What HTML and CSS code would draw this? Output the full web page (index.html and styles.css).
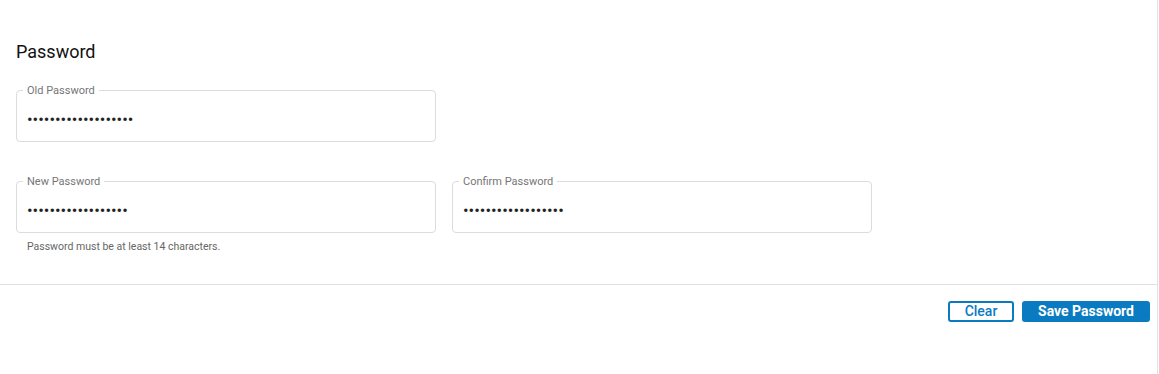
FILE: index.html
```html
<!DOCTYPE html>
<html>
<head>
<meta charset="utf-8">
<link rel="stylesheet" href="styles.css">
</head>
<body>
<div class="page">
  <section class="form">
    <h2 class="title">Password</h2>
    <div class="row">
      <div class="field">
        <span class="label">Old Password</span>
        <input class="input" type="password" value="1234567890123456789">
      </div>
    </div>
    <div class="row row-two">
      <div class="col">
        <div class="field">
          <span class="label">New Password</span>
          <input class="input" type="password" value="123456789012345678">
        </div>
        <p class="hint">Password must be at least 14 characters.</p>
      </div>
      <div class="col">
        <div class="field">
          <span class="label">Confirm Password</span>
          <input class="input" type="password" value="123456789012345678">
        </div>
      </div>
    </div>
  </section>
  <div class="actions">
    <button class="btn btn-outline">Clear</button>
    <button class="btn btn-primary">Save Password</button>
  </div>
</div>
</body>
</html>
```
FILE: styles.css
```css
html, body {
  margin: 0;
  padding: 0;
  background: #fff;
  font-family: Roboto, "Liberation Sans", sans-serif;
}
.page {
  width: 1157px;
  height: 374px;
  border-right: 1px solid #e2e2e2;
}
.form {
  padding: 40px 16px 0;
  height: 285px;
  box-sizing: border-box;
  border-bottom: 1px solid #e0e0e0;
}
.title {
  margin: 0 0 26px;
  font-size: 18px;
  line-height: 24px;
  font-weight: 400;
  color: #111;
}
.row {
  display: flex;
  gap: 16px;
}
.row-two {
  margin-top: 39px;
}
.col {
  display: flex;
  flex-direction: column;
}
.field {
  position: relative;
  width: 420px;
  height: 52px;
  box-sizing: border-box;
  border: 1px solid #dcdcdc;
  border-radius: 4px;
}
.label {
  position: absolute;
  top: -7px;
  left: 6px;
  padding: 0 4px;
  background: #fff;
  font-size: 11px;
  line-height: 14px;
  color: #757575;
}
.input {
  border: none;
  outline: none;
  background: transparent;
  width: 100%;
  box-sizing: border-box;
  padding: 17px 10px 0;
  height: 40px;
  font-family: Roboto, "Liberation Sans", sans-serif;
  font-size: 16.6px;
  color: #222;
  letter-spacing: 0;
}
.hint {
  margin: 7px 0 0 11px;
  font-size: 10.5px;
  line-height: 14px;
  color: #666;
}
.actions {
  display: flex;
  justify-content: flex-end;
  gap: 8px;
  padding: 16px 7px 0 0;
}
.btn {
  height: 21px;
  box-sizing: border-box;
  border-radius: 3px;
  font-family: Roboto, "Liberation Sans", sans-serif;
  font-size: 14px;
  line-height: 17px;
  padding: 0;
  cursor: pointer;
}
.btn-outline {
  width: 66px;
  background: #fff;
  border: 2px solid #0b7bc1;
  color: #0b7bc1;
  font-weight: 500;
}
.btn-primary {
  width: 128px;
  background: #0b7bc1;
  border: 2px solid #0b7bc1;
  color: #fff;
  font-weight: 700;
}
```
